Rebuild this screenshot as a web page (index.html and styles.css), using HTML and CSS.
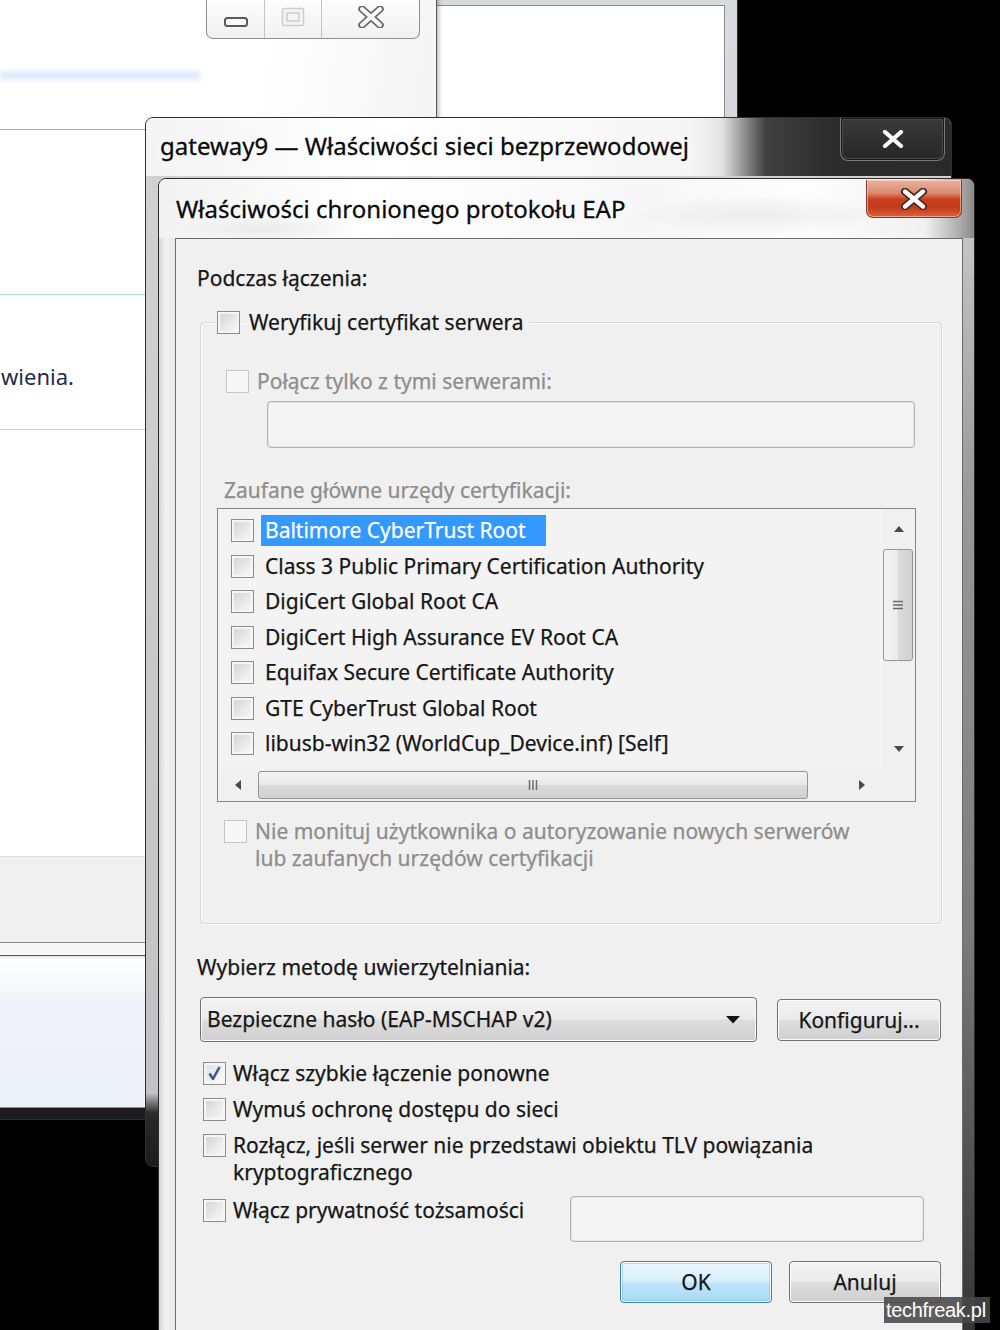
FILE: index.html
```html
<!DOCTYPE html>
<html lang="pl">
<head>
<meta charset="utf-8">
<title>Właściwości chronionego protokołu EAP</title>
<link rel="stylesheet" href="styles.css">
</head>
<body>
<div class="desk">

  <!-- back window (right) -->
  <div class="win win-a">
    <div class="a-client"></div>
  </div>

  <!-- back window (left) -->
  <div class="win win-b">
    <div class="b-top">
      <div class="b-blur"></div>
      <div class="caption-btns">
        <span class="cbtn cbtn-min">
          <svg width="26" height="14" viewBox="0 0 26 14"><rect x="2" y="3" width="22" height="8" rx="2.5" fill="#fafafa" stroke="#5a5a5a" stroke-width="2"/></svg>
        </span>
        <span class="cbtn cbtn-max">
          <svg width="24" height="20" viewBox="0 0 24 20"><rect x="1.5" y="1.5" width="21" height="17" rx="1.5" fill="#f4f4f4" stroke="#cdcdcd" stroke-width="1.5"/><rect x="6" y="6" width="12" height="8" fill="none" stroke="#cdcdcd" stroke-width="1.5"/></svg>
        </span>
        <span class="cbtn cbtn-close">
          <svg width="28" height="22" viewBox="0 0 28 22"><path d="M5 3 L23 19 M23 3 L5 19" stroke="#6a6a6a" stroke-width="7.5" stroke-linecap="round"/><path d="M5 3 L23 19 M23 3 L5 19" stroke="#fbfbfb" stroke-width="4" stroke-linecap="round"/></svg>
        </span>
      </div>
    </div>
    <div class="b-main">
      <div class="b-band"><span class="b-text">wienia.</span></div>
    </div>
    <div class="b-foot"></div>
  </div>

  <!-- gateway9 window -->
  <div class="win win-c">
    <div class="c-title">
      <span class="c-title-text">gateway9 — Właściwości sieci bezprzewodowej</span>
      <span class="c-close">
        <svg width="24" height="18" viewBox="0 0 24 18"><path d="M4 2 L20 16 M20 2 L4 16" stroke="#ffffff" stroke-width="4.2" stroke-linecap="round"/></svg>
      </span>
    </div>
  </div>

  <!-- EAP dialog -->
  <div class="win win-d">
    <div class="d-title">
      <span class="d-title-text">Właściwości chronionego protokołu EAP</span>
      <span class="d-close">
        <svg width="32" height="22" viewBox="0 0 32 22"><path d="M7 3.5 L25 18.5 M25 3.5 L7 18.5" stroke="#4a2a22" stroke-width="8" stroke-linecap="round"/><path d="M7 3.5 L25 18.5 M25 3.5 L7 18.5" stroke="#ffffff" stroke-width="4.4" stroke-linecap="round"/></svg>
      </span>
    </div>
    <div class="d-body">
      <div class="d-frame-l"></div>
      <div class="d-client">
        <div class="lbl lbl-podczas">Podczas łączenia:</div>

        <fieldset class="group">
          <legend class="group-legend">
            <span class="chk"><span class="cb"></span><span class="chk-text">Weryfikuj certyfikat serwera</span></span>
          </legend>

          <div class="chk dis row-polacz"><span class="cb dis"></span><span class="chk-text">Połącz tylko z tymi serwerami:</span></div>
          <div class="field field-servers"></div>

          <div class="lbl dis lbl-zaufane">Zaufane główne urzędy certyfikacji:</div>

          <div class="listbox">
            <ul class="list">
              <li class="item"><span class="cb"></span><span class="item-text sel">Baltimore CyberTrust Root</span></li>
              <li class="item"><span class="cb"></span><span class="item-text">Class 3 Public Primary Certification Authority</span></li>
              <li class="item"><span class="cb"></span><span class="item-text">DigiCert Global Root CA</span></li>
              <li class="item"><span class="cb"></span><span class="item-text">DigiCert High Assurance EV Root CA</span></li>
              <li class="item"><span class="cb"></span><span class="item-text">Equifax Secure Certificate Authority</span></li>
              <li class="item"><span class="cb"></span><span class="item-text">GTE CyberTrust Global Root</span></li>
              <li class="item"><span class="cb"></span><span class="item-text">libusb-win32 (WorldCup_Device.inf) [Self]</span></li>
            </ul>
            <div class="vscroll">
              <span class="sb-arrow sb-arrow-v">
                <svg width="12" height="8" viewBox="0 0 12 8"><path d="M6 1 L11 7 L1 7 Z" fill="#4a4a4a"/></svg>
              </span>
              <span class="thumb thumb-v">
                <svg width="12" height="10" viewBox="0 0 12 10"><path d="M1 1.5 H11 M1 5 H11 M1 8.5 H11" stroke="#6a6a6a" stroke-width="1.4"/></svg>
              </span>
              <span class="sb-track"></span>
              <span class="sb-arrow sb-arrow-v">
                <svg width="12" height="8" viewBox="0 0 12 8"><path d="M1 1 L11 1 L6 7 Z" fill="#4a4a4a"/></svg>
              </span>
            </div>
            <div class="hscroll">
              <span class="sb-arrow sb-arrow-h">
                <svg width="8" height="12" viewBox="0 0 8 12"><path d="M7 1 L7 11 L1 6 Z" fill="#4a4a4a"/></svg>
              </span>
              <span class="thumb thumb-h">
                <svg width="10" height="12" viewBox="0 0 10 12"><path d="M1.5 1 V11 M5 1 V11 M8.5 1 V11" stroke="#6a6a6a" stroke-width="1.4"/></svg>
              </span>
              <span class="sb-track"></span>
              <span class="sb-arrow sb-arrow-h">
                <svg width="8" height="12" viewBox="0 0 8 12"><path d="M1 1 L1 11 L7 6 Z" fill="#4a4a4a"/></svg>
              </span>
            </div>
            <div class="sb-corner"></div>
          </div>

          <div class="chk dis row-nie"><span class="cb dis"></span><span class="chk-text">Nie monituj użytkownika o autoryzowanie nowych serwerów<br>lub zaufanych urzędów certyfikacji</span></div>
        </fieldset>

        <div class="lbl lbl-wybierz">Wybierz metodę uwierzytelniania:</div>
        <div class="method-row">
          <div class="combo">
            <span class="combo-text">Bezpieczne hasło (EAP-MSCHAP v2)</span>
            <svg class="combo-arrow" width="16" height="9" viewBox="0 0 16 9"><path d="M1 1 L15 1 L8 8.5 Z" fill="#111"/></svg>
          </div>
          <button class="btn btn-konf" type="button">Konfiguruj...</button>
        </div>

        <div class="chk opt opt-1"><span class="cb on"><svg width="19" height="19" viewBox="0 0 19 19"><path d="M4.5 9.5 L8 15 L14.5 3" fill="none" stroke="#3b5897" stroke-width="2.6" stroke-linejoin="round"/></svg></span><span class="chk-text">Włącz szybkie łączenie ponowne</span></div>
        <div class="chk opt opt-2"><span class="cb"></span><span class="chk-text">Wymuś ochronę dostępu do sieci</span></div>
        <div class="chk opt opt-3"><span class="cb"></span><span class="chk-text">Rozłącz, jeśli serwer nie przedstawi obiektu TLV powiązania<br>kryptograficznego</span></div>
        <div class="opt-4">
          <div class="chk opt"><span class="cb"></span><span class="chk-text">Włącz prywatność tożsamości</span></div>
          <div class="field field-identity"></div>
        </div>

        <div class="buttons">
          <button class="btn btn-default" type="button">OK</button>
          <button class="btn" type="button">Anuluj</button>
        </div>
      </div>
      <div class="d-frame-r"></div>
    </div>
  </div>

  <div class="watermark">techfreak.pl</div>
</div>
</body>
</html>
```

FILE: styles.css
```css
* { box-sizing: border-box; }
html, body { margin: 0; padding: 0; }
body {
  width: 1000px;
  height: 1330px;
  overflow: hidden;
  background: #000;
  font-family: "Noto Sans", "Open Sans", sans-serif;
  color: #1a1a1a;
}
.desk { position: relative; width: 1000px; height: 1330px; overflow: hidden; background: #000; }
.win { position: absolute; }

/* ---------- window A (behind, right) ---------- */
.win-a {
  left: -10px; top: -10px; width: 748px; height: 1130px;
  border: 1px solid #2e2e2e;
  border-radius: 0 0 6px 6px;
  padding: 14px 12px 11px 0;
  background: linear-gradient(to bottom, #d7dadf 0, #cfd3d8 1112px, #1d1d1d 1117px);
}
.a-client {
  height: 100%;
  border: 1px solid #8c8c8c;
  background: linear-gradient(to bottom, #fff 0, #fff 955px, #f0f3f9 995px, #edf1f8 100%);
}

/* ---------- window B (behind, left) ---------- */
.win-b {
  left: -12px; top: -10px; width: 449px; height: 966px;
  border: 1px solid #555;
  border-top: none;
  background: #f7f7f7;
  padding: 0 3px 12px 0;
  display: flex; flex-direction: column;
  box-shadow: 2px 0 4px rgba(0,0,0,.25);
}
.b-top {
  position: relative;
  height: 140px;
  flex: none;
  background: linear-gradient(100deg, #fff 0, #fff 60%, #f4f4f4 100%);
  border-bottom: 1px solid #a9a9a9;
}
.b-blur {
  margin: 82px 0 0 11px;
  width: 200px; height: 7px;
  background: #d3e2f7;
  filter: blur(3px);
}
.caption-btns {
  position: absolute; top: 9px; right: 13px;
  display: flex;
  height: 40px;
  border: 1px solid #8f8f8f;
  border-top: none;
  border-radius: 0 0 7px 7px;
  background: linear-gradient(#fdfdfd, #f1f1f1);
  overflow: hidden;
}
.cbtn { display: flex; align-items: center; justify-content: center; height: 100%; }
.cbtn-min { width: 58px; border-right: 1px solid #c4c4c4; padding-top: 6px; }
.cbtn-max { width: 57px; border-right: 1px solid #c4c4c4; padding-bottom: 4px; }
.cbtn-close { width: 97px; padding-bottom: 4px; }
.b-main { height: 726px; flex: none; background: #fff; }
.b-band {
  margin-top: 164px;
  height: 136px;
  border-top: 1px solid #a7d7e7;
  border-bottom: 1px solid #a7d7e7;
  padding: 68px 0 0 12px;
}
.b-text { font-size: 22px; line-height: 27px; color: #1f2b4c; display: block; }
.b-foot {
  height: 87px; flex: none;
  background: #f0f0f0;
  border-top: 1px solid #dedede;
  border-bottom: 1px solid #878787;
}

/* ---------- window C (gateway9) ---------- */
.win-c {
  left: 145px; top: 117px; width: 807px; height: 1050px;
  border: 1px solid #2f2f2f;
  border-radius: 8px;
  overflow: hidden;
  background: linear-gradient(to bottom, #d2d2d2 0, #c2c2c2 975px, #2a2a2a 995px, #1b1b1b 100%);
}
.c-title {
  height: 58px;
  display: flex; align-items: flex-start;
  background: linear-gradient(90deg, #f4f4f4 0%, #ffffff 30%, #f5f5f5 68%, #e4e4e4 71.5%, #404040 77%, #2c2c2c 85%, #2a2a2a 100%);
}
.c-title-text {
  padding: 13px 0 0 14px;
  font-size: 24px; line-height: 30px; color: #0a0a0a;
  white-space: nowrap;
  -webkit-text-stroke: 0.3px #0a0a0a;
  text-shadow: 0 0 6px #fff, 0 0 10px #fff;
}
.c-close {
  margin-left: auto; margin-right: 6px;
  width: 105px; height: 43px;
  display: flex; align-items: center; justify-content: center;
  background: linear-gradient(#3a3a3a, #262626);
  border: 1px solid #7a7a7a; border-top: none;
  border-radius: 0 0 8px 8px;
  box-shadow: inset 0 0 0 1px #1a1a1a, inset 0 0 0 2px #484848;
}

/* ---------- window D (EAP dialog) ---------- */
.win-d {
  left: 158px; top: 178px; width: 817px; height: 1200px;
  border: 1px solid #2a2a2a;
  border-radius: 8px 8px 0 0;
  overflow: hidden;
  display: flex; flex-direction: column;
  background: #ececec;
}
.d-title {
  height: 59px; flex: none;
  display: flex; align-items: flex-start;
  background:
    radial-gradient(ellipse 130px 20px at 600px 36px, rgba(190,190,190,.25), rgba(190,190,190,0)),
    radial-gradient(ellipse 90px 14px at 110px 50px, rgba(190,190,190,.25), rgba(190,190,190,0)),
    linear-gradient(90deg, #f2f2f2 0, #ffffff 25%, #f7f7f7 60%, #fdfdfd 80%, #f1f1f1 94%, #b0b0b0 98%, #8a8a8a 100%);
}
.d-title-text {
  padding: 15px 0 0 17px;
  font-size: 24px; line-height: 30px; color: #0a0a0a;
  white-space: nowrap;
  -webkit-text-stroke: 0.3px #0a0a0a;
  text-shadow: 0 0 6px #fff;
}
.d-close {
  margin-left: auto; margin-right: 12px; margin-top: 1px;
  width: 96px; height: 38px;
  display: flex; align-items: center; justify-content: center;
  border: 1px solid #7a3b2c;
  border-top: none;
  border-radius: 0 0 7px 7px;
  background: linear-gradient(#e9b3a2 0%, #dc8a70 35%, #c8401f 52%, #c43c1b 75%, #d9643f 100%);
  box-shadow: inset 0 0 0 1px rgba(255,220,200,.55);
}
.d-body { flex: 1; display: flex; min-height: 0; }
.d-frame-l {
  width: 16px; flex: none;
  background: linear-gradient(90deg, #d6d6d6, #f1f1f1 40%, #e8e8e8);
}
.d-frame-r {
  width: 11px; flex: none;
  background: linear-gradient(to bottom, #c4c4c4 0, #9a9a9a 250px, #7a7a7a 700px, #454545 1000px, #2e2e2e 100%);
}
.d-client {
  flex: 1;
  background: #f0f0f0;
  border: 1px solid #6c6c6c;
  font-size: 21px;
  line-height: 27px;
  color: #161616;
  -webkit-text-stroke-width: 0.25px;
}

/* ---------- generic controls ---------- */
.lbl { white-space: nowrap; }
.dis, .dis .chk-text { color: #8d8d8d; }

.chk { display: flex; align-items: flex-start; gap: 8px; white-space: nowrap; }
.cb {
  flex: none;
  width: 23px; height: 23px;
  margin-top: 2px;
  border: 1px solid #8c8c8c;
  background: linear-gradient(135deg, #cfd2d6 0%, #e9e9e9 55%, #fbfbfb 100%);
  box-shadow: inset 0 0 0 2px #f6f6f6;
  display: inline-flex; align-items: center; justify-content: center;
}
.cb.dis { border-color: #c6c6c6; background: #f7f7f7; box-shadow: none; }
.cb.on { background: linear-gradient(135deg, #dde0e6 0%, #f1f1f1 60%, #fdfdfd 100%); }

.field {
  height: 47px;
  border: 1px solid #b3b3b3;
  border-radius: 4px;
  background: #f4f4f4;
  box-shadow: inset 0 0 0 1px #e4e4e4;
}

.btn {
  font: inherit;
  color: #161616;
  width: 152px; height: 42px;
  padding: 0;
  border: 1px solid #707070;
  border-radius: 4px;
  background: linear-gradient(#f3f3f3 0, #ebebeb 48%, #dddddd 52%, #cfcfcf 100%);
  box-shadow: inset 0 0 0 1px #fbfbfb;
  line-height: 40px;
  -webkit-text-stroke-width: 0.25px;
}
.btn-default {
  border-color: #3c7fb1;
  background: linear-gradient(#eaf6fd 0, #d9f0fc 48%, #bee6fd 52%, #a7d9f5 100%);
  box-shadow: inset 0 0 0 1px #fbfdff, inset 0 0 0 2px rgba(120,190,235,.5);
}

/* ---------- dialog layout ---------- */
.lbl-podczas { margin: 26px 0 0 21px; }

.group {
  margin: 17px 20px 0 24px;
  padding: 0 0 51px 0;
  min-width: 0;
  border: 1px solid #d3d9dd;
  border-radius: 4px;
  box-shadow: inset 1px 1px 0 #fbfbfb, 1px 1px 0 #fbfbfb;
}
.group-legend { margin-left: 14px; padding: 0 5px 0 2px; line-height: 27px; }
.group-legend .chk { gap: 9px; }

.row-polacz { margin: 32px 0 0 25px; }
.row-polacz.chk { gap: 8px; }
.field-servers { margin: 6px 26px 0 66px; }

.lbl-zaufane { margin: 29px 0 0 23px; }

.listbox {
  margin: 4px 0 0 16px;
  width: 699px; height: 294px;
  border: 1px solid #858585;
  background: #f3f3f3;
  display: grid;
  grid-template-columns: 1fr 33px;
  grid-template-rows: 1fr 32px;
}
.list { list-style: none; margin: 0; padding: 4px 0 0 13px; overflow: hidden; }
.item { display: flex; align-items: center; height: 35.5px; gap: 7px; white-space: nowrap; }
.item .cb { margin-top: 0; }
.item-text { padding: 0 5px 0 4px; line-height: 31px; color: #161616; }
.item-text.sel { background: #3399ff; color: #fff; padding-right: 20px; }

.vscroll { display: flex; flex-direction: column; background: #f0f0f0; }
.hscroll { display: flex; background: #f0f0f0; }
.sb-corner { background: #f0f0f0; }
.sb-arrow { display: flex; align-items: center; justify-content: center; flex: none; }
.sb-arrow-v { height: 40px; }
.sb-arrow-h { width: 40px; }
.sb-track { flex: 1; }
.thumb {
  flex: none;
  display: flex; align-items: center; justify-content: center;
  border: 1px solid #959595;
  border-radius: 3px;
}
.thumb-v {
  height: 112px; margin: 0 2px 0 1px;
  background: linear-gradient(90deg, #f4f4f4 0, #eaeaea 50%, #dadada 52%, #d2d2d2 100%);
}
.thumb-h {
  width: 550px; margin: 2px 0 2px 0;
  background: linear-gradient(#f4f4f4 0, #eaeaea 48%, #dadada 52%, #d0d0d0 100%);
}

.row-nie { margin: 16px 0 0 23px; }

.lbl-wybierz { margin: 30px 0 0 21px; }
.method-row { display: flex; align-items: center; margin: 16px 0 0 24px; }
.combo {
  width: 557px; height: 45px;
  display: flex; align-items: center;
  padding: 0 15px 0 6px;
  border: 1px solid #707070;
  border-radius: 4px;
  background: linear-gradient(#f3f3f3 0, #ebebeb 48%, #dddddd 52%, #cfcfcf 100%);
  box-shadow: inset 0 0 0 1px #fbfbfb;
}
.combo-text { flex: 1; white-space: nowrap; }
.btn-konf { margin-left: 20px; width: 164px; }

.opt { gap: 7px; }
.opt-1 { margin: 18px 0 0 27px; }
.opt-2 { margin: 9px 0 0 27px; }
.opt-3 { margin: 9px 0 0 27px; }
.opt-4 { display: flex; align-items: flex-start; margin: 10px 38px 0 27px; }
.opt-4 .chk { padding-top: 1px; }
.field-identity { margin-left: auto; width: 354px; height: 46px; }

.buttons { display: flex; justify-content: flex-end; gap: 17px; margin: 19px 21px 0 0; }

/* ---------- watermark ---------- */
.watermark {
  position: absolute; left: 884px; top: 1297px;
  height: 26px;
  padding: 0 4px 0 2px;
  background: rgba(72,72,72,.88);
  color: #fff;
  font-family: "Liberation Sans", Arial, sans-serif;
  font-size: 20px; line-height: 26px;
  letter-spacing: -0.3px;
}
```
